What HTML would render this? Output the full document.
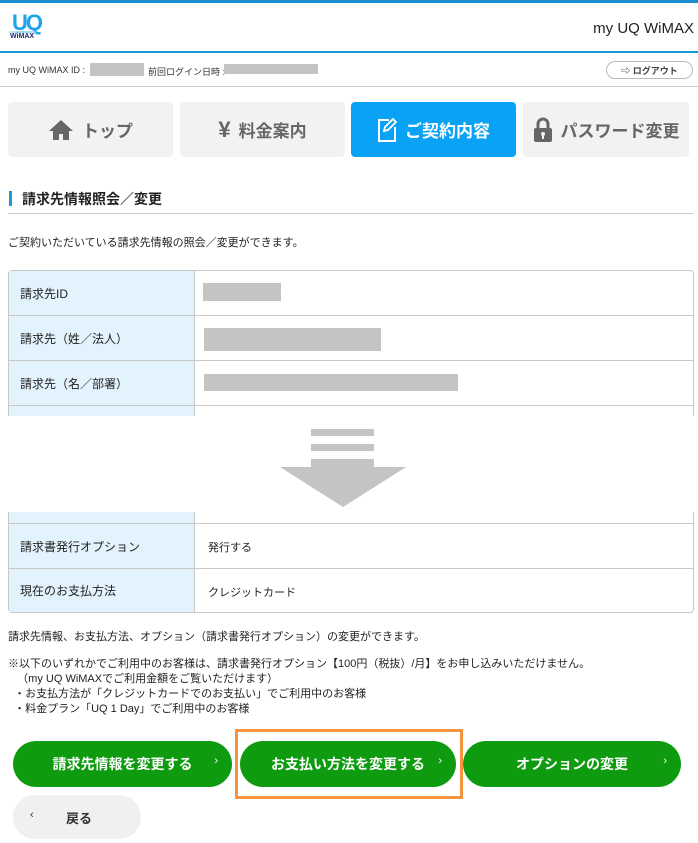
<!DOCTYPE html>
<html><head><meta charset="utf-8">
<style>
*{margin:0;padding:0;box-sizing:border-box}
body{width:698px;height:843px;overflow:hidden;background:#fff;font-family:"Liberation Sans","Noto Sans CJK JP",sans-serif;color:#222;position:relative}
.a{position:absolute}
.tab{position:absolute;top:102px;height:55px;background:#f2f2f2;border-radius:4px;color:#666;font-size:17px;font-weight:bold;display:flex;align-items:center;justify-content:center;gap:8px}
.lc{position:absolute;left:9px;width:185px;background:#e3f3fd;font-size:12px;padding-left:11px;display:flex;align-items:center}
.hl{position:absolute;left:8px;width:685px;height:1px;background:#c8c8c8}
.gb{position:absolute;background:#c4c4c4}
.btn{position:absolute;top:741px;height:46px;background:#0f9b0f;border-radius:23px;color:#fff;font-weight:bold;font-size:14px;display:flex;align-items:center;justify-content:center}
.btn span.c{position:absolute;right:14px;top:14px;font-size:11px;font-weight:normal}
.t{font-size:11px;position:absolute}
</style></head><body>
<div class="a" style="left:0;top:0;width:698px;height:3px;background:#1a8fcf"></div>
<div class="a" style="left:12px;top:12px;font-size:22px;font-weight:bold;color:#1ca3e8;letter-spacing:-2px;line-height:22px">UQ</div>
<div class="a" style="left:8px;top:31px;width:30px;height:2px;background:#9fd6f3;border-radius:50%"></div>
<div class="a" style="left:10px;top:33px;font-size:7px;font-weight:bold;color:#1a2a6c">WiMAX</div>
<div class="a" style="right:4px;top:20px;font-size:15px;color:#222">my UQ WiMAX</div>
<div class="a" style="left:0;top:51px;width:698px;height:2px;background:#1a9ad6"></div>
<div class="a" style="left:8px;top:65px;font-size:9px;color:#333">my UQ WiMAX ID :</div>
<div class="gb" style="left:90px;top:63px;width:54px;height:13px"></div>
<div class="a" style="left:148px;top:65px;font-size:9px;color:#333">前回ログイン日時 :</div>
<div class="gb" style="left:224px;top:64px;width:94px;height:10px"></div>
<div class="a" style="left:606px;top:61px;width:87px;height:18px;border:1px solid #bbb;border-radius:9px;font-size:9px;font-weight:bold;color:#444;display:flex;align-items:center;justify-content:center">⇨ ログアウト</div>
<div class="a" style="left:0;top:86px;width:698px;height:1px;background:#c8c8c8"></div>

<div class="tab" style="left:8px;width:165px"><svg width="26" height="22" viewBox="0 0 26 22"><path d="M13 1L1 12h4v9h6v-6h4v6h6v-9h4z" fill="#666"/></svg>トップ</div>
<div class="tab" style="left:180px;width:165px"><span style="font-size:22px">¥</span> 料金案内</div>
<div class="tab" style="left:351px;width:165px;background:#0aa2f5;color:#fff"><svg width="20" height="26" viewBox="0 0 20 26"><path d="M12 3H2v21h16V10" fill="none" stroke="#fff" stroke-width="2"/><path d="M16 2l3 3-8 8-4 1 1-4z" fill="none" stroke="#fff" stroke-width="1.8"/></svg>ご契約内容</div>
<div class="tab" style="left:523px;width:166px"><svg width="20" height="26" viewBox="0 0 20 26"><path d="M5 11V7a5 5 0 0110 0v4" fill="none" stroke="#666" stroke-width="3"/><rect x="1" y="11" width="18" height="14" rx="2" fill="#666"/><circle cx="10" cy="17" r="2" fill="#f2f2f2"/><rect x="9" y="17" width="2" height="5" fill="#f2f2f2"/></svg>パスワード変更</div>

<div class="a" style="left:9px;top:191px;width:3px;height:15px;background:#1a9ad6"></div>
<div class="a" style="left:22px;top:189px;font-size:14px;font-weight:bold;color:#222">請求先情報照会／変更</div>
<div class="a" style="left:8px;top:213px;width:685px;height:1px;background:#c8c8c8"></div>
<div class="t" style="left:8px;top:234px">ご契約いただいている請求先情報の照会／変更ができます。</div>

<div class="a" style="left:8px;top:270px;width:686px;height:146px;border:1px solid #c8c8c8;border-bottom:none;border-radius:4px 4px 0 0"></div>
<div class="lc" style="top:271px;height:44px">請求先ID</div>
<div class="lc" style="top:316px;height:44px">請求先（姓／法人）</div>
<div class="lc" style="top:361px;height:44px">請求先（名／部署）</div>
<div class="lc" style="top:406px;height:10px"></div>
<div class="a" style="left:194px;top:271px;width:1px;height:145px;background:#c8c8c8"></div>
<div class="hl" style="top:315px"></div><div class="hl" style="top:360px"></div><div class="hl" style="top:405px"></div>
<div class="gb" style="left:203px;top:283px;width:78px;height:18px"></div>
<div class="gb" style="left:204px;top:328px;width:177px;height:23px"></div>
<div class="gb" style="left:204px;top:374px;width:254px;height:17px"></div>

<div class="gb" style="left:311px;top:429px;width:63px;height:7px"></div>
<div class="gb" style="left:311px;top:444px;width:63px;height:7px"></div>
<div class="gb" style="left:311px;top:459px;width:63px;height:9px"></div>
<svg class="a" style="left:280px;top:467px" width="126" height="40"><path d="M0 0h126L63 40z" fill="#c4c4c4"/></svg>

<div class="a" style="left:8px;top:512px;width:686px;height:101px;border:1px solid #c8c8c8;border-top:none;border-radius:0 0 4px 4px"></div>
<div class="lc" style="top:512px;height:11px"></div>
<div class="lc" style="top:524px;height:44px">請求書発行オプション</div>
<div class="lc" style="top:569px;height:43px">現在のお支払方法</div>
<div class="a" style="left:194px;top:512px;width:1px;height:100px;background:#c8c8c8"></div>
<div class="hl" style="top:523px"></div><div class="hl" style="top:568px"></div>
<div class="t" style="left:208px;top:539px">発行する</div>
<div class="t" style="left:208px;top:584px">クレジットカード</div>

<div class="t" style="left:8px;top:628px">請求先情報、お支払方法、オプション（請求書発行オプション）の変更ができます。</div>
<div class="t" style="left:8px;top:657px;line-height:15px">※以下のいずれかでご利用中のお客様は、請求書発行オプション【100円（税抜）/月】をお申し込みいただけません。<br>&nbsp;&nbsp;&nbsp;（my UQ WiMAXでご利用金額をご覧いただけます）<br>&nbsp;&nbsp;・お支払方法が「クレジットカードでのお支払い」でご利用中のお客様<br>&nbsp;&nbsp;・料金プラン「UQ 1 Day」でご利用中のお客様</div>

<div class="btn" style="left:13px;width:219px">請求先情報を変更する<span class="c">›</span></div>
<div class="btn" style="left:240px;width:216px">お支払い方法を変更する<span class="c">›</span></div>
<div class="btn" style="left:463px;width:218px">オプションの変更<span class="c">›</span></div>
<div class="a" style="left:235px;top:729px;width:228px;height:70px;border:3px solid #f7923d"></div>
<div class="a" style="left:13px;top:795px;width:128px;height:44px;background:#f0f0f0;border-radius:22px;font-size:13px;font-weight:bold;color:#333"><span class="a" style="left:17px;top:14px;font-size:11px;font-weight:normal">‹</span><span class="a" style="left:53px;top:13px">戻る</span></div>
</body></html>
